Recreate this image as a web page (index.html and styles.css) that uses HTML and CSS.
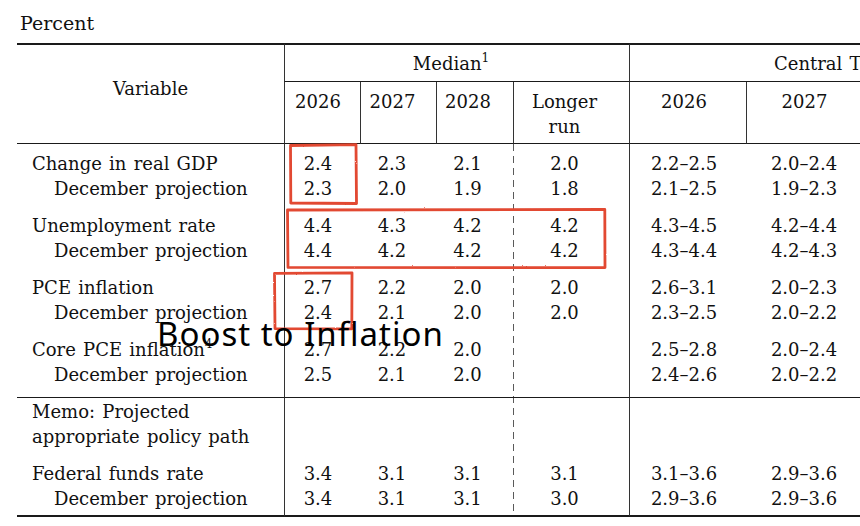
FILE: index.html
```html
<!DOCTYPE html>
<html>
<head>
<meta charset="utf-8">
<link rel="stylesheet" href="styles.css">
</head>
<body>
<div class="page">
  <div class="caption">Percent</div>
  <table class="proj">
    <colgroup>
      <col class="w-var"><col class="w-76"><col class="w-76"><col class="w-77"><col class="w-116"><col class="w-117"><col class="w-124"><col class="w-117"><col class="w-117">
    </colgroup>
    <thead>
      <tr class="h1">
        <th rowspan="2" class="var">Variable</th>
        <th colspan="4" class="grp med">Median<sup>1</sup></th>
        <th colspan="4" class="grp ct">Central Tendency<sup>2</sup></th>
      </tr>
      <tr class="h2">
        <th>2026</th><th>2027</th><th>2028</th><th>Longer<br>run</th>
        <th>2026</th><th>2027</th><th>2028</th><th>Longer<br>run</th>
      </tr>
    </thead>
    <tbody>
      <tr class="top"><td class="lab">Change in real GDP</td><td>2.4</td><td>2.3</td><td>2.1</td><td>2.0</td><td>2.2–2.5</td><td>2.0–2.4</td><td>1.8–2.1</td><td>1.8–2.0</td></tr>
      <tr><td class="lab sub">December projection</td><td>2.3</td><td>2.0</td><td>1.9</td><td>1.8</td><td>2.1–2.5</td><td>1.9–2.3</td><td>1.8–2.1</td><td>1.8–2.0</td></tr>
      <tr class="gs"><td class="lab">Unemployment rate</td><td>4.4</td><td>4.3</td><td>4.2</td><td>4.2</td><td>4.3–4.5</td><td>4.2–4.4</td><td>4.0–4.3</td><td>4.0–4.3</td></tr>
      <tr><td class="lab sub">December projection</td><td>4.4</td><td>4.2</td><td>4.2</td><td>4.2</td><td>4.3–4.4</td><td>4.2–4.3</td><td>4.0–4.3</td><td>4.0–4.3</td></tr>
      <tr class="gs"><td class="lab">PCE inflation</td><td>2.7</td><td>2.2</td><td>2.0</td><td>2.0</td><td>2.6–3.1</td><td>2.0–2.3</td><td>2.0–2.1</td><td>2.0</td></tr>
      <tr><td class="lab sub">December projection</td><td>2.4</td><td>2.1</td><td>2.0</td><td>2.0</td><td>2.3–2.5</td><td>2.0–2.2</td><td>2.0</td><td>2.0</td></tr>
      <tr class="gs"><td class="lab">Core PCE inflation<sup>4</sup></td><td>2.7</td><td>2.2</td><td>2.0</td><td></td><td>2.5–2.8</td><td>2.0–2.4</td><td>2.0–2.1</td><td></td></tr>
      <tr class="end"><td class="lab sub">December projection</td><td>2.5</td><td>2.1</td><td>2.0</td><td></td><td>2.4–2.6</td><td>2.0–2.2</td><td>2.0</td><td></td></tr>
      <tr class="memo"><td class="lab">Memo: Projected<br>appropriate policy path</td><td></td><td></td><td></td><td></td><td></td><td></td><td></td><td></td></tr>
      <tr class="gs"><td class="lab">Federal funds rate</td><td>3.4</td><td>3.1</td><td>3.1</td><td>3.1</td><td>3.1–3.6</td><td>2.9–3.6</td><td>2.9–3.6</td><td>2.8–3.6</td></tr>
      <tr class="last"><td class="lab sub">December projection</td><td>3.4</td><td>3.1</td><td>3.1</td><td>3.0</td><td>2.9–3.6</td><td>2.9–3.6</td><td>2.9–3.6</td><td>2.8–3.5</td></tr>
    </tbody>
  </table>

  <svg class="marks" width="860" height="526" viewBox="0 0 860 526">
    <defs>
      <filter id="rough" x="-5%" y="-5%" width="110%" height="110%">
        <feTurbulence type="fractalNoise" baseFrequency="0.9" numOctaves="2" seed="3" result="n"/>
        <feDisplacementMap in="SourceGraphic" in2="n" scale="1.6" xChannelSelector="R" yChannelSelector="G"/>
      </filter>
    </defs>
    <g fill="none" stroke="#e24832" stroke-width="2.8" stroke-linejoin="round" filter="url(#rough)">
      <path d="M290.5 145.5 L356 144.6 L356.5 203.5 L290.8 203 Z"/>
      <path d="M287.5 210 L604.8 209.4 L605 267.6 L288 267.4 Z"/>
      <path d="M274.5 273.4 L352 272.8 L351.8 328.8 L275 328.6 Z"/>
    </g>
  </svg>
  <div class="boost">Boost to Inflation</div>
</div>
</body>
</html>
```

FILE: styles.css
```css
html, body {
  margin: 0;
  padding: 0;
  overflow: hidden;
  background: #ffffff;
}

.page {
  position: relative;
  width: 860px;
  height: 526px;
  overflow: hidden;
  font-family: "DejaVu Serif", "Noto Serif", serif;
  font-size: 18px;
  letter-spacing: 0;
  word-spacing: 1.5px;
  color: #111;
}

.caption {
  padding: 11px 0 0 20px;
  font-size: 19px;
  line-height: 25px;
}

.proj {
  margin: 7px 0 0 17px;
  border-collapse: separate;
  border-spacing: 0;
  table-layout: fixed;
  width: 1087px;
  font-family: inherit;
}

.w-var { width: 267px; }
.w-76 { width: 76px; }
.w-77 { width: 77px; }
.w-116 { width: 116px; }
.w-117 { width: 117px; }
.w-124 { width: 124px; }

.proj th,
.proj td {
  padding: 0;
  line-height: 25px;
  font-weight: normal;
  vertical-align: top;
  white-space: nowrap;
  font-family: inherit;
}

.proj sup {
  font-size: 12px;
  line-height: 0;
  vertical-align: 8px;
  letter-spacing: 0;
}

.h1 th {
  border-top: 2px solid #1a1a1a;
  padding: 6px 8px 5px 0;
  text-align: center;
}

.h1 th.med { padding-right: 12px; }
.h1 th.ct { padding-right: 16px; }

.h1 .var {
  padding: 31px 0 0 0;
  border-bottom: 1px solid #1a1a1a;
}

.h1 .grp {
  border-left: 1px solid #333;
  border-bottom: 1px solid #1a1a1a;
}

.h2 th {
  border-left: 1px solid #333;
  border-bottom: 1px solid #1a1a1a;
  padding: 7px 0 4px 0;
  text-align: center;
}

.h2 th:nth-child(1) { padding-right: 9px; }
.h2 th:nth-child(2) { padding-right: 12px; }
.h2 th:nth-child(3) { padding-right: 14px; }
.h2 th:nth-child(4) { padding-right: 14px; }
.h2 th:nth-child(5) { padding-right: 8px; }
.h2 th:nth-child(6) { padding-right: 8px; }
.h2 th:nth-child(7) { padding-right: 8px; }
.h2 th:nth-child(8) { padding-right: 8px; }

.proj tbody {
  background-image: repeating-linear-gradient(to bottom, #5a5a5a 0 7px, transparent 7px 12px);
  background-size: 1px 100%;
  background-position: 496px 0;
  background-repeat: no-repeat;
}

.proj tbody td { text-align: center; }
.proj tbody td:nth-child(2) { border-left: 1px solid #333; padding-right: 9px; }
.proj tbody td:nth-child(3) { padding-right: 12px; }
.proj tbody td:nth-child(4) { padding-right: 14px; }
.proj tbody td:nth-child(5) { padding-left: 1px; padding-right: 14px; }
.proj tbody td:nth-child(6) { border-left: 1px solid #333; padding-right: 8px; }
.proj tbody td:nth-child(7) { padding-right: 8px; }
.proj tbody td:nth-child(8) { padding-right: 8px; }
.proj tbody td:nth-child(9) { padding-right: 8px; }

.proj tbody td.lab {
  text-align: left;
  padding-left: 15px;
}

.proj tbody td.sub {
  padding-left: 37px;
}

.proj tr.top td { padding-top: 7px; }
.proj tr.gs td { padding-top: 12px; }
.proj tr.memo td { padding-top: 1px; }

.proj tr.end td {
  padding-bottom: 10px;
  border-bottom: 1px solid #1a1a1a;
}

.proj tr.last td {
  padding-bottom: 4px;
  border-bottom: 2px solid #1a1a1a;
}

.marks {
  position: absolute;
  left: 0;
  top: 0;
  pointer-events: none;
}

.boost {
  position: absolute;
  left: 157px;
  top: 317px;
  font-family: "Noto Sans", sans-serif;
  font-size: 33px;
  line-height: 33px;
  letter-spacing: 1px;
  word-spacing: 0;
  color: #000;
  white-space: nowrap;
}
```
